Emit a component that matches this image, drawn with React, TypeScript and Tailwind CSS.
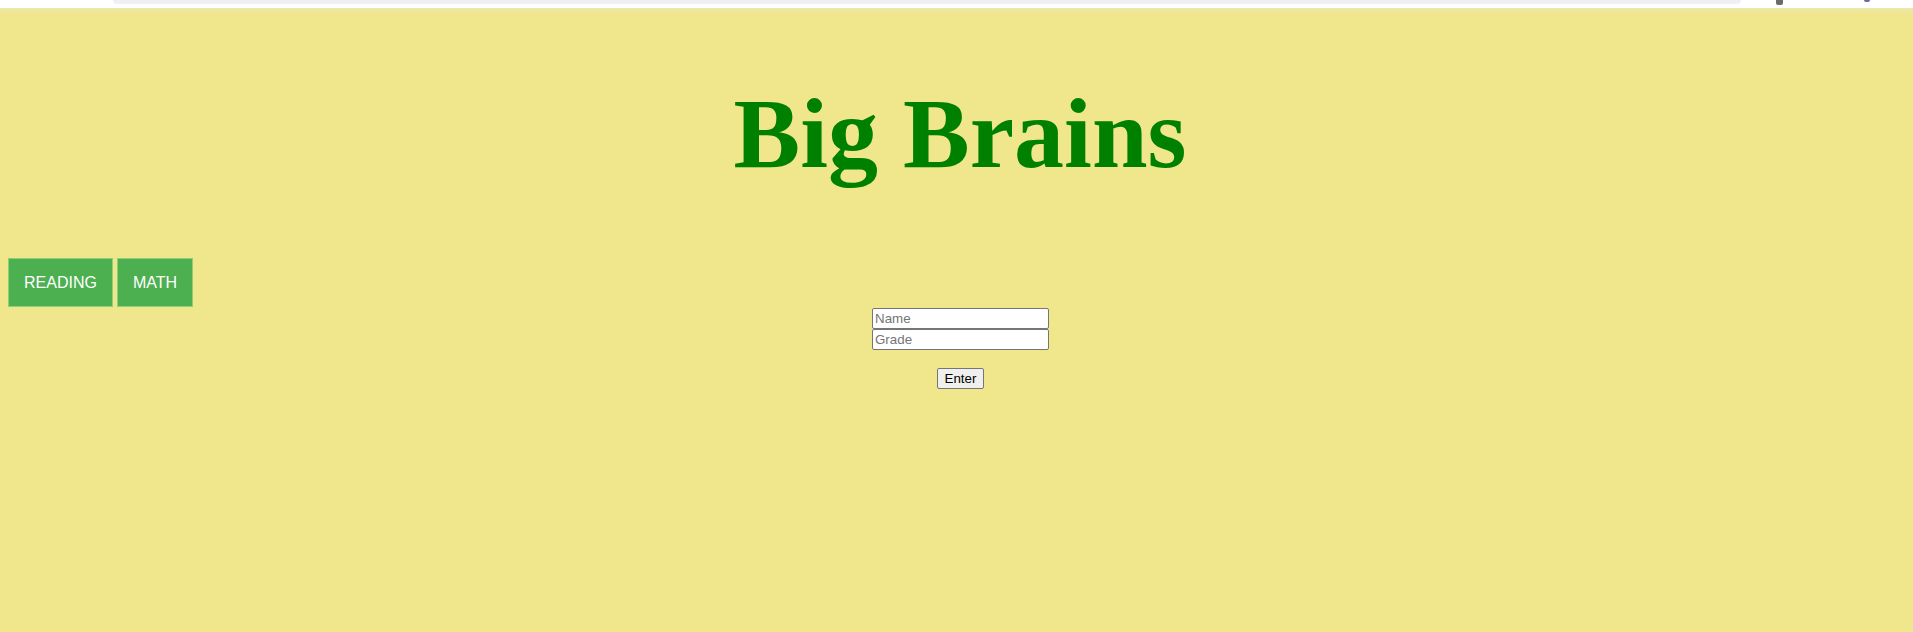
export default function App() {
  return (
    <div className="min-h-[632px] w-full bg-[#f0e68c] flex flex-col" style={{ fontFamily: '"Liberation Sans", Arial, sans-serif' }}>
      <div className="h-[8px] bg-white relative shrink-0">
        <div className="absolute left-[113px] right-[172px] top-0 h-[4px] bg-[#eef0f4] rounded-b-[4px]" />
        <div className="absolute left-[1776px] top-0 w-[7px] h-[5px] bg-[#6b6b6b] rounded-b-[2px]" />
        <div className="absolute left-[1864px] top-0 w-[6px] h-[2px] bg-[#6b6b9b] rounded-b-full" />
      </div>
      <div className="h-[6px] bg-gradient-to-b from-[#ebe7b0] to-[#f0e68c]" />
      <h1
        className="text-center text-[100px] font-bold text-[#008000] leading-[115px] mt-[62px] pl-[7px]"
        style={{ fontFamily: '"Liberation Serif", "Times New Roman", serif' }}
      >
        Big Brains
      </h1>
      <div className="flex gap-[4px] pl-[8px] mt-[67px]">
        <button className="h-[49px] px-[15px] bg-[#4caf50] text-white text-[16px] border border-[#8fcf7a]">READING</button>
        <button className="h-[49px] px-[15px] bg-[#4caf50] text-white text-[16px] border border-[#8fcf7a]">MATH</button>
      </div>
      <div className="flex flex-col items-center pl-[8px] mt-[1px] text-[13.33px]">
        <input
          placeholder="Name"
          className="w-[177px] h-[21px] px-[2px] bg-white border border-[#767676] rounded-[2px] placeholder:text-[#757575] outline-none"
        />
        <input
          placeholder="Grade"
          className="w-[177px] h-[21px] px-[2px] bg-white border border-[#767676] rounded-[2px] placeholder:text-[#757575] outline-none"
        />
        <button className="mt-[18px] h-[21px] px-[7px] bg-[#efefef] border border-[#767676] rounded-[2px] text-black">
          Enter
        </button>
      </div>
    </div>
  );
}
